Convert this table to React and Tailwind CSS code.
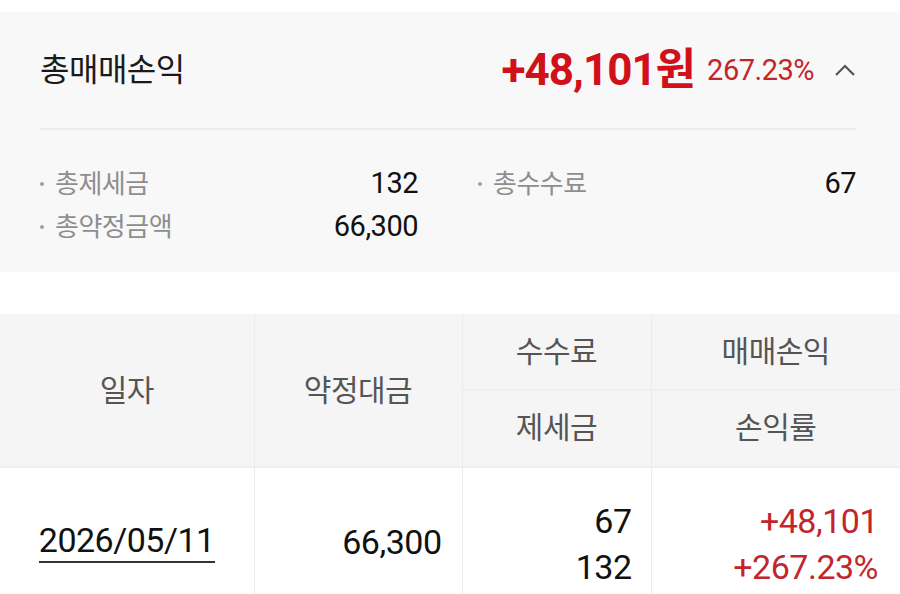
const font = { fontFamily: 'Roboto, "Noto Sans CJK KR", sans-serif' }

function SummaryRow({ label, value }) {
  return (
    <div className="flex h-[43px] items-center justify-between">
      <span className="flex items-center text-[26px] leading-none tracking-[-0.5px] text-[#8e8e8e]">
        <span className="mr-[11px] h-[4px] w-[4px] rounded-full bg-[#a0a0a0]" />
        {label}
      </span>
      <span className="text-[29px] leading-none tracking-[-0.5px] text-[#111]">{value}</span>
    </div>
  )
}

export default function App() {
  return (
    <div className="h-[594px] w-[900px] overflow-hidden bg-white" style={font}>
      <div className="h-3" />
      <section className="h-[260px] bg-[#f8f8f8] px-10">
        <div className="flex h-[116px] items-center justify-between">
          <h2 className="text-[32px] font-normal leading-none tracking-[-0.5px] text-[#1a1a1a]">총매매손익</h2>
          <div className="mr-[4px] flex items-center">
            <span className="text-[44px] font-bold leading-none tracking-[-1px] text-[#d0111b]">+48,101원</span>
            <span className="ml-3 text-[29px] leading-none tracking-[-0.5px] text-[#c2262b]">267.23%</span>
            <svg className="ml-5" width="22" height="14" viewBox="0 0 22 14" fill="none">
              <path d="M2 12L11 3L20 12" stroke="#555" strokeWidth="2.2" />
            </svg>
          </div>
        </div>
        <div className="mr-[4px] h-[2px] bg-[#ebebeb]" />
        <div className="mt-[32px] mr-[4px] grid grid-cols-2 gap-x-[60px]">
          <div>
            <SummaryRow label="총제세금" value="132" />
            <SummaryRow label="총약정금액" value="66,300" />
          </div>
          <div>
            <SummaryRow label="총수수료" value="67" />
          </div>
        </div>
      </section>
      <div className="h-[42px]" />
      <table className="w-full border-collapse text-center">
        <colgroup>
          <col className="w-[254px]" />
          <col className="w-[208px]" />
          <col className="w-[189px]" />
          <col className="w-[249px]" />
        </colgroup>
        <thead className="bg-[#f5f5f6] text-[30px] tracking-[-0.5px] text-[#555]">
          <tr className="h-[75px]">
            <th rowSpan={2} className="border-r border-[#ebebeb] font-normal">일자</th>
            <th rowSpan={2} className="border-r border-[#ebebeb] font-normal">약정대금</th>
            <th className="border-r border-b border-[#ebebeb] font-normal">수수료</th>
            <th className="border-b border-[#ebebeb] font-normal">매매손익</th>
          </tr>
          <tr className="h-[78px]">
            <th className="border-r border-b-0 border-[#ebebeb] font-normal">제세금</th>
            <th className="font-normal">손익률</th>
          </tr>
        </thead>
        <tbody className="text-[34px] tracking-[-0.5px] text-[#111]">
          <tr className="h-[150px] border-t-2 border-[#efefef] align-top">
            <td className="border-r border-[#ebebeb] pt-[52px] leading-[40px]">
              <span className="border-b-2 border-[#333] pb-[1px]">2026/05/11</span>
            </td>
            <td className="border-r border-[#ebebeb] pr-5 pt-[54px] text-right leading-[40px]">66,300</td>
            <td className="border-r border-[#ebebeb] pr-[19px] pt-[30px] text-right leading-[46px]">
              <div>67</div>
              <div>132</div>
            </td>
            <td className="pr-[22px] pt-[30px] text-right leading-[46px] text-[#c2262b]">
              <div>+48,101</div>
              <div>+267.23%</div>
            </td>
          </tr>
        </tbody>
      </table>
    </div>
  )
}
